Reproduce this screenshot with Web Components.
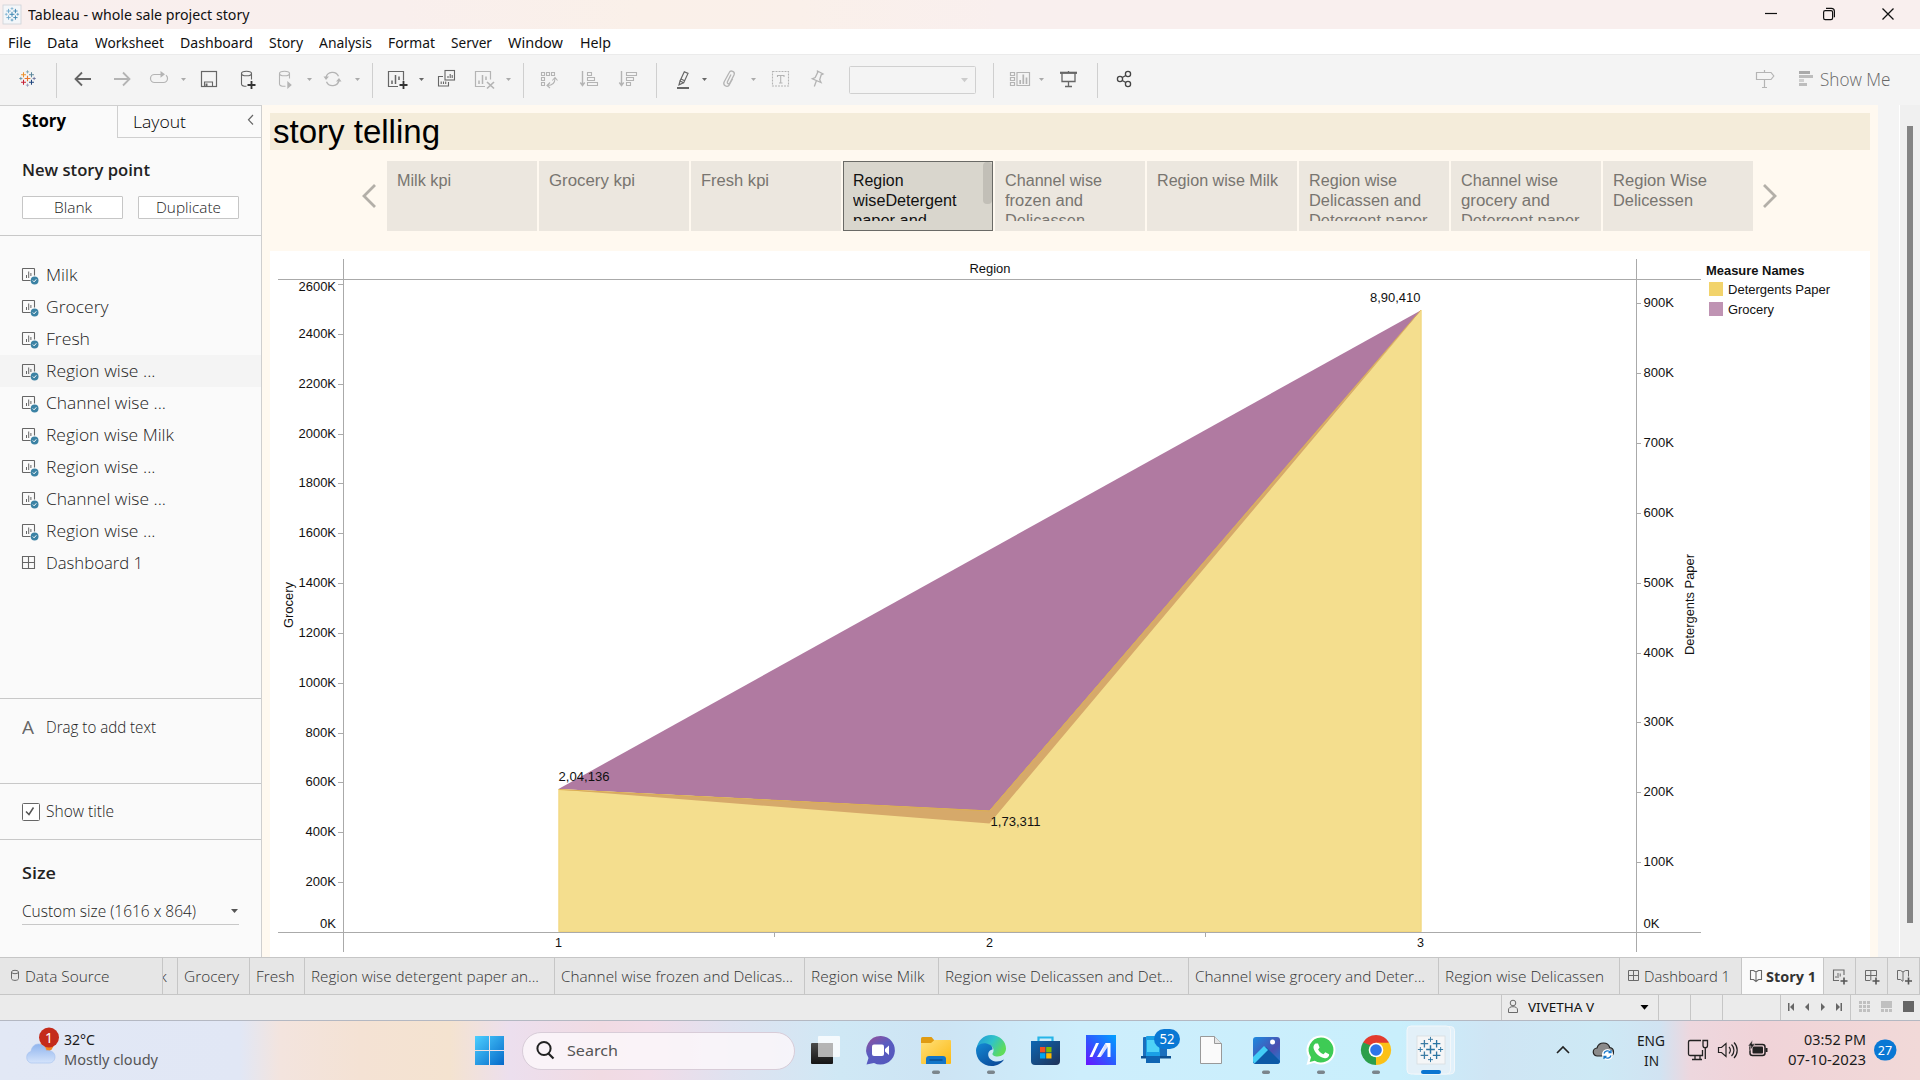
<!DOCTYPE html>
<html lang="en">
<head>
<meta charset="utf-8">
<title>Tableau - whole sale project story</title>
<style>
html,body{margin:0;padding:0;width:1920px;height:1080px;overflow:hidden;background:#fff}
</style>
</head>
<body>
<app-window></app-window>
<script>
const plus=(x,y,r,c,w)=>`<path d="M${x-r} ${y}H${x+r}M${x} ${y-r}V${y+r}" stroke="${c}" stroke-width="${w}" fill="none"/>`;
const logo=(cx,cy,k,cols)=>[[0,0,3,1.2],[-4.2,-4,2.6,1.1],[4.2,-4,2.6,1.1],[-4.2,4,2.6,1.1],[4.2,4,2.6,1.1],[0,-7,1.7,.8],[0,7,1.7,.8],[-7,0,1.7,.8],[7,0,1.7,.8]]
  .map((p,i)=>plus(cx+p[0]*k,cy+p[1]*k,p[2]*k,cols[i%cols.length],p[3]*Math.min(k,1.2))).join('');
const caret=(x,y,c='#aaa',w=5)=>`<path d="M${x} ${y}h${w}l${-w/2} ${w*.6}z" fill="${c}"/>`;
const G='#b4b4b4',D='#666';

/* Lays items out left to right; every item is [start, width, content, style, kind]. */
function row(top,h,items,start=0){
  let cur=start,out='';
  for(const [x,w,content,style='',kind='t'] of items){
    const ml=(x-cur).toFixed(1);
    out+=kind==='g'
      ?`<svg style="margin-left:${ml}px;${style}" width="${w}" height="${h}" viewBox="${x} ${top} ${w} ${h}" fill="none">${content}</svg>`
      :`<fit-text w="${w}" style="margin-left:${ml}px;${style}">${content}</fit-text>`;
    cur=x+w;
  }
  return out;
}
function define(name,css,html){
  customElements.define(name,class extends HTMLElement{
    connectedCallback(){
      if(this.shadowRoot)return;
      this.attachShadow({mode:'open'}).innerHTML=`<style>:host{display:block;box-sizing:border-box}*{box-sizing:border-box}svg{flex:none;display:block;overflow:visible}${css}</style>`+(typeof html==='function'?html(this):html);
    }
  });
}
/* One line of text set to an exact advance width. */
customElements.define('fit-text',class extends HTMLElement{
  connectedCallback(){
    if(this.shadowRoot)return;
    this.attachShadow({mode:'open'}).innerHTML='<style>:host{display:inline-block;white-space:nowrap;flex:none}span{display:inline-block;transform-origin:0 50%}</style><span><slot></slot></span>';
    const s=this.shadowRoot.querySelector('span'),w=+this.getAttribute('w'),n=s.getBoundingClientRect().width;
    this.style.width=w+'px';
    if(n)s.style.transform=`scaleX(${w/n})`;
  }
});

define('title-bar',`:host{height:29px;display:flex;align-items:center;background:linear-gradient(90deg,#f9efee 0,#f9efed 400px,#faf0e9 640px,#faf0ea 800px,#f9efee 1000px);font:14.5px "Noto Sans",sans-serif;color:#111}fit-text{margin-top:-2px}`,
 row(0,29,[
  [3,18,`<rect x="3" y="5" width="18" height="19" fill="#f3f6f9" stroke="#cdd3d8" stroke-width=".8"/>`+logo(12,14.3,.82,['#3a85b0','#6aa6cb']),'','g'],
  [27.5,221.500,'Tableau - whole sale project story'],
  [1765,12,`<path d="M1765 13.5h12" stroke="#111" stroke-width="1.2"/>`,'','g'],
  [1823,12,`<rect x="1823.6" y="10.6" width="9" height="9" rx="1.6" stroke="#111" stroke-width="1.2"/><path d="M1826 8.4h5.400a3 3 0 0 1 3 3v5.800" stroke="#111" stroke-width="1.2"/>`,'','g'],
  [1882,12,`<path d="M1882.500 8.500l11 11m0-11l-11 11" stroke="#111" stroke-width="1.3"/>`,'','g']]));

define('menu-bar',`:host{height:25px;display:flex;align-items:center;background:#fff;font:14.5px "Noto Sans",sans-serif;color:#111}`,
 row(29,25,[[8,23,'File'],[47,31.500,'Data'],[95,69,'Worksheet'],[180,73,'Dashboard'],[269,34,'Story'],[319,53,'Analysis'],[388,47,'Format'],[450.500,41,'Server'],[508,55,'Window'],[579.500,31,'Help']]));

const sep=x=>[x,1,`<path d="M${x+.5} 63v35" stroke="#cfcfcf"/>`,'','g'];
const ct=(x,c='#aaa')=>[x,5,caret(x,78,c),'','g'];
define('tool-bar',`:host{height:51px;display:flex;align-items:center;background:#f4f4f4;border-top:1px solid #ebebeb;font:300 17.5px "Open Sans",sans-serif;color:#666}svg{margin-top:-1px}fit-text{margin-top:-3px}`,
 row(54,51,[
  [19,17,logo(27.5,78.5,.95,['#e8762c','#eb912c','#5b879b','#c72035','#1f457e','#7199a6','#8a8fb5','#59879b','#5c6692']),'','g'],
  sep(56),
  [75,16,`<path d="M91 79H76m6-6.500l-6.500 6.500 6.500 6.500" stroke="${D}" stroke-width="1.8"/>`,'','g'],
  [114,16,`<path d="M114 79h15m-6-6.500l6.500 6.500-6.500 6.500" stroke="${G}" stroke-width="1.8"/>`,'','g'],
  [150,18,`<path d="M160 82.500h-5.500a4 4 0 0 1-4-4 4 4 0 0 1 4-4h8M156 82.500h7.500a4 4 0 0 0 4-4 3.600 3.600 0 0 0-1.500-3.300" stroke="${G}" stroke-width="1.2"/><path d="M160.500 71l4.500 3.300-4.500 3.500z" fill="${G}"/>`,'','g'],
  ct(181),
  [201,16,`<rect x="201.500" y="71.500" width="15" height="15" stroke="${D}" stroke-width="1.2"/><path d="M204.500 86.500v-4.500h8v4.500" stroke="${D}" stroke-width="1.1"/><rect x="205.500" y="83.500" width="2" height="3" fill="${D}"/>`,'','g'],
  [241,15,`<ellipse cx="246.500" cy="73.500" rx="5" ry="2.300" stroke="${D}" stroke-width="1.1"/><path d="M241.500 73.500v10.500c0 1.500 2 2.300 5 2.300M251.500 73.500v6" stroke="${D}" stroke-width="1.100"/>${plus(251.500,85,4,'#333',1.800)}`,'','g'],
  [279,13,`<ellipse cx="284.500" cy="73.500" rx="5" ry="2.300" stroke="${G}" stroke-width="1.100"/><path d="M279.500 73.500v10.500c0 1.500 2 2.300 5 2.300h1M289.500 73.500v5" stroke="${G}" stroke-width="1.100"/><path d="M287.300 81l4.500 4-4.500 4z" fill="${G}"/>`,'','g'],
  ct(307),
  [324,17,`<path d="M326 77.500a6.600 6.600 0 0 1 12.500-1.200M339 80.500a6.600 6.600 0 0 1-12.500 1.200" stroke="${G}" stroke-width="1.300"/><path d="M323.500 76.500h5.500l-3 3.500zM336 81.500h5.500l-2.500-3.500z" fill="${G}"/>`,'','g'],
  ct(355),sep(372),
  [388,19,`<path d="M398 86.500h-9.500v-15h15v9" stroke="${D}" stroke-width="1.200"/><path d="M392 84v-3.500M395.500 84v-9M399 80v-3.500" stroke="${D}" stroke-width="1.500"/>${plus(403.500,85,4,'#333',1.800)}`,'','g'],
  ct(419,D),
  [438,17,`<rect x="445" y="70.500" width="9.500" height="9.500" stroke="${D}" stroke-width="1.100"/><path d="M443 76.500h-4.500v9.500h10v-4M448 78v-2M450.200 78v-4M452.200 78v-3M441.200 84v-2.500M443.500 84v-2.500M445.700 84v-2.500" stroke="${D}" stroke-width="1.100"/>`,'','g'],
  [475,19,`<path d="M485 86.500h-9.500v-15h15v8" stroke="${G}" stroke-width="1.200"/><path d="M479 84v-3.500M482.500 84v-9M486 80v-3.500" stroke="${G}" stroke-width="1.500"/><path d="M487 82l7 6.500m0-6.500l-7 6.500" stroke="${G}" stroke-width="1.700"/>`,'','g'],
  ct(506),sep(523),
  [541,16,`<path d="M541.500 72.500h3v3h-3zM546.500 72.500h3v3h-3zM551.500 72.500h3v3h-3zM541.500 77.500h3v3h-3zM541.500 82.500h3v3h-3zM547.500 85.500c5 0 7.500-2 7.500-7.500M550 82.500l-3 3 3 2.500M552.300 80.500l2.700-3 2.500 3" stroke="${G}" stroke-width="1.100"/>`,'','g'],
  [580,18,`<path d="M582.500 71v14.500m-2.200-3l2.200 3 2.200-3" stroke="${G}" stroke-width="1.400"/><path d="M587.500 72.500h4v3h-4zM587.500 77.500h7v3h-7zM587.500 82.500h10v3h-10z" stroke="${G}" stroke-width="1.100"/>`,'','g'],
  [619,18,`<path d="M621.500 71v14.500m-2.200-3l2.200 3 2.200-3" stroke="${G}" stroke-width="1.400"/><path d="M626.500 72.500h10v3h-10zM626.500 77.500h7v3h-7zM626.500 82.500h4v3h-4z" stroke="${G}" stroke-width="1.100"/>`,'','g'],
  sep(656),
  [677,12,`<path d="M680 81l4.300-9.300 3.700 1.700-4.300 9.300zM680 81l-1 3.800 4.500-2.100M681 79l3.600 1.700" stroke="${D}" stroke-width="1.200"/><rect x="677" y="87" width="12" height="2" fill="${D}"/>`,'','g'],
  ct(702,D),
  [723,13,`<path d="M731 74.500l-3.700 7.500a1.400 1.400 0 0 0 2.400 1.300l4.300-8.300a2.700 2.700 0 0 0-4.900-2.300l-5 9.300a3 3 0 0 0 5 3.200l3.500-6.500" stroke="${G}" stroke-width="1.300"/>`,'','g'],
  ct(751),
  [772,17,`<rect x="772.500" y="71.500" width="16" height="14.500" stroke="${G}" stroke-width="1.100" stroke-dasharray="2 1"/><path d="M777.500 77v-1.500h6.500V77M780.700 75.500v7.500M779 83h3.500" stroke="${G}" stroke-width="1.100"/>`,'','g'],
  [811,13,`<path d="M817.500 71l5.500 3-1.800.8-1.500 5 1.300 2.700-8.700-3.700 2.900-1.300 2.300-4.700zM816.300 81l-2 5.500" stroke="${G}" stroke-width="1.300"/>`,'','g'],
  [849,127,`<rect x="849.500" y="66.500" width="126" height="27" rx="1" stroke="#d0d0d0"/>${caret(961,78,'#ccc',7)}`,'','g'],
  sep(993),
  [1010,20,`<path d="M1010.500 72.500h4v3h-4zM1010.500 77.500h4v3h-4zM1010.500 82.500h4v3h-4zM1017 72.500h12.500v13H1017z" stroke="${G}" stroke-width="1.200"/><path d="M1020.200 84v-4M1023.300 84v-9.500M1026.500 84v-6.500" stroke="${G}" stroke-width="1.700"/>`,'','g'],
  ct(1039),
  [1060,17,`<path d="M1060 72.800h17" stroke="${D}" stroke-width="2.200"/><path d="M1062 73v8.500h13V73M1068.500 71v1M1068.500 82v4.500M1065 86.500h7" stroke="${D}" stroke-width="1.300"/>`,'','g'],
  sep(1097),
  [1117,15,`<circle cx="1120" cy="79" r="2.600" stroke="#444" stroke-width="1.300"/><circle cx="1128" cy="74" r="2.600" stroke="#444" stroke-width="1.300"/><circle cx="1128" cy="84" r="2.600" stroke="#444" stroke-width="1.300"/><path d="M1122.300 77.500l3.500-2M1122.300 80.500l3.500 2" stroke="#444" stroke-width="1.300"/>`,'','g'],
  [1756,18,`<path d="M1764.500 70v2.500M1764.500 79.500v8M1762 87.500h5M1756.500 72.500h14.500l2.800 3.500-2.800 3.500h-14.500z" stroke="${G}" stroke-width="1.200"/>`,'','g'],
  [1799,14,`<path d="M1799 71h11v3h-11z" fill="#aaa"/><path d="M1799 75h14v3h-14zM1799 83h8v3h-8z" fill="#bdbdbd"/><path d="M1799 79h5v3h-5z" fill="#d0d0d0"/>`,'','g'],
  [1819.500,70.500,'Show Me']]));

const sheetIcon=`<svg width="17" height="18" viewBox="0 0 17 18" fill="none"><path d="M8.500 12.500H1a.5.500 0 0 1-.5-.5V1A.5.500 0 0 1 1 .500h11a.5.500 0 0 1 .500.500v6.500" stroke="#666" stroke-width="1.100"/><path d="M4.500 10V7M6.700 10V3.500M8.900 8V5" stroke="#666" stroke-width="1"/><circle cx="12.600" cy="12.500" r="3.900" fill="#3b82a4"/><path d="M10.800 12.500l1.300 1.300 2.200-2.500" stroke="#fff" stroke-width="1"/></svg>`;
const gridIcon=`<svg width="17" height="18" viewBox="0 0 17 18" fill="none"><path d="M.5.500h12v12H.5zM6.500.500v12M.5 6.500h12" stroke="#666" stroke-width="1.100"/></svg>`;
define('sheet-item',`:host{height:32px;display:flex;align-items:center;padding-left:22px;font:300 17px "Open Sans",sans-serif;color:#222}:host([active]){background:#f4f4f4}fit-text{margin:-2px 0 0 7px}svg{margin-top:4px}`,
 el=>`${el.hasAttribute('dashboard')?gridIcon:sheetIcon}<fit-text w="${el.getAttribute('w')}">${el.getAttribute('label')}</fit-text>`);

define('side-panel',`:host{width:262px;height:852px;background:#fafafa;border-right:1px solid #cfcfcf;display:flex;flex-direction:column;font:300 15.500px/22px "Open Sans",sans-serif;color:#222}
 .tabs{height:33px;display:flex;border-top:1px solid #cfcfcf;color:#000}.tab1{width:117px;padding:4px 0 0 22px;font-weight:700;font-size:17px}.tab2{flex:1;border-left:1px solid #cfcfcf;border-bottom:1px solid #cfcfcf;padding:5px 7px 0 15px;display:flex;justify-content:space-between;font-size:17px}
 .new{height:98px;border-bottom:1px solid #c8c8c8;padding:21px 22px 0}.h{font-weight:600;font-size:17px;height:22px;display:block}.btns{display:flex;gap:15px;margin-top:15px}.b{width:101px;height:23px;border:1px solid #c6c6c6;border-radius:1px;background:#fff;display:flex;align-items:center;justify-content:center;font-size:14.500px}
 .list{height:463px;padding-top:23px;border-bottom:1px solid #c8c8c8}.drag{height:85px;border-bottom:1px solid #c8c8c8;display:flex;padding:17px 0 0 22px;gap:12px}.show{height:56px;border-bottom:1px solid #c8c8c8;display:flex;align-items:center;padding-left:22px;gap:6px}.show fit-text{margin-top:-1px}
 .size{padding:22px 22px 0}.sel{display:flex;justify-content:space-between;align-items:center;border-bottom:1px solid #c8c8c8;height:29px;margin-top:12px;padding:2px 1px 0 0}`,
 `<div class="tabs"><div class="tab1"><fit-text w="44">Story</fit-text></div><div class="tab2"><fit-text w="53">Layout</fit-text><svg width="7" height="12" viewBox="0 0 7 12" style="margin-top:3px"><path d="M6 1L1.500 5.800 6 10.500" fill="none" stroke="#666" stroke-width="1.200"/></svg></div></div>
 <div class="new"><fit-text class="h" w="128">New story point</fit-text><div class="btns"><div class="b"><fit-text w="38">Blank</fit-text></div><div class="b"><fit-text w="65">Duplicate</fit-text></div></div></div>
 <div class="list">${[['Milk',31.5],['Grocery',62.5],['Fresh',44],['Region wise ...',109.5,'active'],['Channel wise ...',120],['Region wise Milk',128],['Region wise ...',109.5],['Channel wise ...',120],['Region wise ...',109.5],['Dashboard 1',97,'dashboard']].map(a=>`<sheet-item label="${a[0]}" w="${a[1]}" ${a[2]||''}></sheet-item>`).join('')}</div>
 <div class="drag"><fit-text w="12" style="font-size:17.500px;font-weight:400;color:#666">A</fit-text><fit-text w="110">Drag to add text</fit-text></div>
 <div class="show"><svg width="18" height="18" viewBox="0 0 18 18"><rect x=".5" y=".5" width="17" height="17" rx="1" fill="#fff" stroke="#666"/><path d="M4 8.500l3 3 4.500-7" fill="none" stroke="#555" stroke-width="1.500"/></svg><fit-text w="68">Show title</fit-text></div>
 <div class="size"><fit-text class="h" w="34">Size</fit-text><div class="sel"><fit-text w="174">Custom size (1616 x 864)</fit-text><svg width="7" height="4" viewBox="0 0 7 4"><path d="M0 0h7L3.500 4z" fill="#555"/></svg></div></div>`);

define('story-point',`:host{width:150px;height:70px;background:#ece7df;padding:10px 0 0 10px;color:#787570;font:16px/20px "Liberation Sans",sans-serif;display:flex;flex:none}
 :host([active]){background:#d9d6cd;color:#111;box-shadow:inset 0 0 0 1px #6a6a66}div{flex:1;height:50px;overflow:hidden}fit-text{display:block}i{display:none;width:9px;height:42px;margin:-9px 1px 0 0;border-radius:4px;background:#c2bfb7}:host([active]) i{display:block}`,
 el=>`<div>${el.getAttribute('lines').split('|').map(l=>{const[t,w]=l.split('~');return`<fit-text w="${w}">${t}</fit-text>`}).join('')}</div><i></i>`);

define('story-nav',`:host{height:70px;display:flex;align-items:center;padding-left:92px;margin-top:11px}.p{display:flex;gap:2px;margin:0 10px 0 11px}:host>svg,svg{margin-top:-1px}`,
 `<svg width="14" height="26" viewBox="0 0 14 26"><path d="M13 2L2 13l11 11" fill="none" stroke="#b3afa8" stroke-width="2.800"/></svg><div class="p">${['Milk kpi~54','Grocery kpi~86','Fresh kpi~68','!Region~50.5|wiseDetergent~103.5|paper and~74','Channel wise~97|frozen and~78|Delicassen~80','Region wise Milk~121','Region wise~88|Delicassen and~112|Detergent paper~118.5','Channel wise~97|grocery and~89|Detergent paper~118.5','Region Wise~94|Delicessen~80'].map(s=>`<story-point ${s[0]==='!'?'active':''} lines="${s.replace('!','')}"></story-point>`).join('')}</div><svg width="14" height="26" viewBox="0 0 14 26"><path d="M1 2l11 11L1 24" fill="none" stroke="#b3afa8" stroke-width="2.800"/></svg>`);

const T=(x,y,t,w,a='start',e='')=>`<text x="${x}" y="${y}" text-anchor="${a}" textLength="${w}" lengthAdjust="spacingAndGlyphs" ${e}>${t}</text>`;
const ly=[284,334,384,434,483,533,583,633,683,733,782,832,882], ry=[303,373,443,513,583,653,722,792,862];
define('area-chart',`:host{width:1600px;height:706px;background:#fff;margin-top:20px;overflow:hidden;font:13px "Liberation Sans",sans-serif}text{fill:#111}`,
 `<svg width="1600" height="706" viewBox="270 251 1600 706">
 <path d="M558.500 789L1421.500 310 989.500 811z" fill="#b07aa1"/>
 <path d="M558.500 789L989.500 811 1421.500 310V932H558.500z" fill="#f4de8e"/>
 <path d="M558.500 789.500L989.500 810.500 1421.500 310 989.500 823.500z" fill="#d6a96a"/>
 <path d="M558.500 789.500L989.500 811 1421 310" fill="none" stroke="#dbae52" stroke-width="1"/>
 <path d="M559 789.500V931.500H1421V310" fill="none" stroke="#f2d780" stroke-width="1"/>
 <g stroke="#aaa" fill="none"><path d="M278 279.500H1701M278 932.500H1701M343.500 259V952M1636.500 259V952M774.500 933v4M1205.500 933v4"/>
 <path d="${ly.map(y=>`M338 ${y+.5}h5`).join('')}${ry.map(y=>`M1637 ${y+.5}h4`).join('')}"/></g>
 ${ly.map((y,i)=>T(336,i?y+4:291,2600-200*i+'K',i<9?37.500:30.500,'end')).join('')}${T(336,928,'0K',16,'end')}
 ${ry.map((y,i)=>T(1643.500,y+4,900-100*i+'K',30.500)).join('')}${T(1643.500,928,'0K',16)}
 ${T(969.500,273,'Region',41)}${T(558.500,947,'1',7,'middle')}${T(989.500,947,'2',7,'middle')}${T(1420.500,947,'3',7,'middle')}
 ${T(558.500,781,'2,04,136',51)}${T(990.500,826,'1,73,311',50)}${T(1420.500,302,'8,90,410',50.500,'end')}
 ${T(0,0,'Grocery',46,'middle','transform="translate(293 605) rotate(-90)"')}${T(0,0,'Detergents Paper',101,'middle','transform="translate(1694 604.500) rotate(-90)"')}
 ${T(1706,275,'Measure Names',98.500,'start','font-weight="bold"')}
 <rect x="1709" y="282" width="14" height="14" fill="#f2d36b"/><rect x="1709" y="302" width="14" height="14" fill="#bf93b3"/>
 ${T(1728,294,'Detergents Paper',102)}${T(1728,314,'Grocery',46)}</svg>`);

define('story-canvas',`:host{width:1616px;height:852px;background:#fff9f0;padding:8px 0 0 8px}.t{width:1600px;height:37px;background:#f4ecda;font:33px/37px "Liberation Sans",sans-serif;color:#000;padding-left:3px}`,
 `<div class="t"><fit-text w="167">story telling</fit-text></div><story-nav></story-nav><area-chart></area-chart>`);
define('scroll-track',`:host{flex:1;background:#f4f4f4;display:flex;justify-content:flex-end}.r{width:21px;border-left:1px solid #fff;background:#f0f0f0;padding:21px 0 0 7px}.k{width:6px;height:797px;background:#858585}`,`<div class="r"><div class="k"></div></div>`);

const bsep=x=>[x,1,`<path d="M${x+.5} 957v37" stroke="#c6c6c6"/>`,'','g'];
const S='#6a6a6a';
const chart6=(x,y)=>`<path d="M${x+6} ${y+11}h-5.500v-10.500h10.500v5" stroke="${S}" stroke-width="1.100"/><path d="M${x+3} ${y+8.500}v-2M${x+5} ${y+8.500}v-5M${x+7.200} ${y+7}v-3" stroke="${S}"/>`;
define('sheet-tabs',`:host{height:38px;display:flex;align-items:center;background:#e6e6e6;border-top:1px solid #c6c6c6;border-bottom:1px solid #c6c6c6;font:300 15px "Open Sans",sans-serif;color:#333;overflow:hidden}.clip{overflow:hidden}`,
 row(958,36,[
  [11,8,`<ellipse cx="15" cy="972" rx="3.500" ry="1.700" stroke="${S}"/><path d="M11.500 972v6.500c0 2.500 7 2.500 7 0V972" stroke="${S}"/>`,'','g'],
  [25,84.500,'Data Source'],bsep(162),
  [163,6,`<svg class="clip" x="163" y="958" width="6" height="36"><text x="-3.500" y="24" font-size="15" fill="#333">k</text></svg>`,'','g'],
  bsep(177),[184,55,'Grocery'],bsep(249),[256,38.500,'Fresh'],bsep(304),
  [311,228,'Region wise detergent paper an...'],bsep(554),[561,232,'Channel wise frozen and Delicas...'],bsep(804),[811,113.500,'Region wise Milk'],bsep(938),[945,228,'Region wise Delicassen and Det...'],bsep(1188),[1195,230,'Channel wise grocery and Deter...'],bsep(1438),[1445,159,'Region wise Delicassen'],bsep(1619),
  [1628,11,`<path d="M1628.500 970.500h10v10h-10zM1633.500 970.500v10M1628.500 975.500h10" stroke="${S}"/>`,'','g'],
  [1644,86,'Dashboard 1'],
  [1741,25,`<rect x="1742" y="958" width="81" height="36" fill="#fafafa"/><path d="M1741.500 958v36M1823.500 958v36" stroke="#c6c6c6"/><path d="M1750.500 970.500h3l2.500 1.500 2.500-1.500h3v9h-3l-2.500 2-2.500-2h-3zM1756 972v9" stroke="${S}" stroke-width="1.100"/>`,'','g'],
  [1766,50,'Story 1','font-weight:700;position:relative;margin-top:-1px'],
  [1833,15,chart6(1833,969.500)+plus(1844,981,3.500,'#555',1.600),'','g'],bsep(1855),
  [1865,15,`<path d="M1870 980.500h-4.500v-10h11v6M1870.800 970.500v10M1865.500 975.500h11" stroke="${S}"/>`+plus(1876,981,3.500,'#555',1.600),'','g'],bsep(1887),
  [1897,15,`<path d="M1903 981.500l-2.500-2h-3v-9h3l2.500 1.500 2.500-1.500h3v6M1903 972v9" stroke="${S}"/>`+plus(1908.500,981,3.500,'#555',1.600),'','g'],bsep(1919)]));

const ssep=x=>[x,1,`<path d="M${x+.5} 995v25" stroke="#c6c6c6"/>`,'','g'];
define('status-bar',`:host{height:25px;display:flex;align-items:center;background:#ebebeb;font:13px "Noto Sans",sans-serif;color:#111}fit-text{margin-top:-2px}`,
 row(995,25,[ssep(1501),
  [1508,11,`<circle cx="1513" cy="1003" r="2.800" stroke="${S}"/><path d="M1508.500 1012.500v-2.500c0-2.500 2-3.300 4.500-3.300s4.500.800 4.500 3.300v2.500z" stroke="${S}"/>`,'','g'],
  [1528,66,'VIVETHA V'],[1640,9,caret(1640.500,1005,'#000',8),'','g'],ssep(1658),ssep(1690),ssep(1722),ssep(1780),
  [1788,55,`<path d="M1788 1003h1.500v8h-1.500zM1794 1003v8l-4-4zM1809 1003v8l-4-4zM1821 1003v8l4-4zM1836 1003v8l4-4zM1840.500 1003h1.500v8h-1.500z" fill="#666"/>`,'','g'],ssep(1850),
  [1859,56,[0,4,8].flatMap(a=>[0,4,8].map(b=>`<rect x="${1859+a}" y="${1001+b}" width="3" height="3" fill="#c0c0c0"/>`)).join('')+`<path d="M1881 1001h11v7h-11zM1881 1009h3v3h-3zM1885 1009h3v3h-3zM1889 1009h3v3h-3z" fill="#c0c0c0"/><rect x="1903" y="1001" width="11" height="11" fill="#666"/>`,'','g']]));

const dot=x=>`<rect x="${x-4}" y="1070.500" width="8" height="3.500" rx="1.700" fill="#7b858c"/>`;
define('task-bar',`:host{height:60px;display:flex;align-items:center;border-top:1px solid #b4b8c2;background:linear-gradient(90deg,#e2e8f5 0,#e1e7f5 240px,#f3e4de 280px,#f4e2d4 360px,#f4e3d0 450px,#ecdfee 510px,#f1dbe3 600px,#f1dce8 650px,#dfe2f0 730px,#cfe8f5 840px,#cde4f4 940px,#cdeefc 1080px,#c9effc 1400px,#cfe5f4 1490px,#cde9f5 1600px,#d1e3f2 1660px,#edd7de 1690px,#f0d3d8 1760px,#f1d9d8 1920px);font:14.500px/20px "Noto Sans",sans-serif;color:#1b1b1b}
 :host>svg,svg{margin-top:-1px}.col{display:flex;flex-direction:column;flex:none;padding-bottom:3px}.s{width:273px;height:38px;margin:0 0 0 18px;border-radius:19px;background:#fbf7fad9;border:1px solid #d8ccd8;display:flex;align-items:center;gap:13px;padding-left:13px;color:#555;flex:none}.s fit-text{margin-top:-1px}.r{align-items:flex-end}.c{align-items:center;padding-bottom:2px}`,
 row(1020,60,[
  [25,34,`<defs><linearGradient id="cl" x2="0" y2="1"><stop stop-color="#8fb4ee"/><stop offset="1" stop-color="#d5e4fb"/></linearGradient></defs><circle cx="47" cy="1045" r="6.500" fill="#f58220"/><path d="M31 1063a6 6 0 0 1 0-11.500c.5-4.500 3.500-7.500 7.500-7.500 4.500 0 7 3 7.800 6.500 5.500-.5 8.700 2.500 8.700 6.300 0 3.500-2.500 6.200-6 6.200z" fill="url(#cl)" stroke="#a3c0ef" stroke-width=".6"/><circle cx="49" cy="1037.500" r="10" fill="#c42b1c"/><text x="49" y="1042.500" text-anchor="middle" font-size="14" fill="#fff">1</text>`,'','g']])+
 `<div class="col" style="margin-left:5px"><fit-text w="31">32°C</fit-text><fit-text w="94" style="color:#555">Mostly cloudy</fit-text></div>`+
 row(1020,60,[[475,29,`<defs><linearGradient id="w" x2="1" y2="1"><stop stop-color="#4ccfff"/><stop offset="1" stop-color="#0669c9"/></linearGradient></defs><path d="M475 1036h14v14h-14zM490 1036h14v14h-14zM475 1051h14v14h-14zM490 1051h14v14h-14z" fill="url(#w)"/>`,'','g']],158)+
 `<div class="s"><svg width="18" height="18" viewBox="0 0 18 18"><circle cx="8" cy="7.500" r="6.600" fill="none" stroke="#222" stroke-width="2"/><path d="M12.500 12.500l5 5" stroke="#222" stroke-width="2.200"/></svg><fit-text w="51">Search</fit-text></div>`+
 row(1020,60,[
  [811,30,`<defs><linearGradient id="tv" x2="0" y2="1"><stop stop-color="#4a4a4a"/><stop offset="1" stop-color="#151515"/></linearGradient></defs><rect x="811" y="1043" width="22" height="21" rx="1" fill="url(#tv)"/><rect x="818" y="1036" width="22" height="21" rx="1" fill="#fff" opacity=".78"/><path d="M818 1043h15v14h-15z" fill="#aaa" opacity=".75"/>`,'','g'],
  [866,29,`<defs><linearGradient id="ch" x2=".6" y2="1"><stop stop-color="#9a4f96"/><stop offset=".5" stop-color="#5a5cc0"/><stop offset="1" stop-color="#5558bd"/></linearGradient></defs><path d="M881 1036a14.300 14.300 0 1 1-7 27l-7.500 1.500 2-6.500A14.300 14.300 0 0 1 881 1036z" fill="url(#ch)"/><rect x="872" y="1044.500" width="12" height="11.500" rx="2" fill="#fff"/><path d="M885 1049l4-3.500v9.500l-4-3.500z" fill="#fff"/>`,'','g'],
  [921,30,`<path d="M921 1038.500a1.500 1.500 0 0 1 1.500-1.500h9l3 3.500-3 4h-10.500z" fill="#e09b12"/><defs><linearGradient id="fe" x2="1" y2="1"><stop stop-color="#ffe07a"/><stop offset="1" stop-color="#fcb912"/></linearGradient></defs><path d="M921 1043h10l3.500-3H950a1 1 0 0 1 1 1v22a1 1 0 0 1-1 1h-28a1 1 0 0 1-1-1z" fill="url(#fe)"/><path d="M926 1064v-5a3 3 0 0 1 3-3h14a3 3 0 0 1 3 3v5z" fill="#1275c8"/><path d="M929.500 1060h13" stroke="#0a4f93" stroke-width="1.500"/>${dot(936)}`,'','g'],
  [976,30,`<defs><linearGradient id="e1" x2="1" y2=".5"><stop stop-color="#2196dc"/><stop offset=".55" stop-color="#30c3c8"/><stop offset="1" stop-color="#5fdc5a"/></linearGradient><linearGradient id="e2" x2=".7" y2="1"><stop stop-color="#1389d4"/><stop offset="1" stop-color="#0b4c9b"/></linearGradient></defs><path d="M976.500 1049c1-8 7-14 14.500-14 9 0 15 6.500 15 13.500 0 5-4 8-8.500 8-3.500 0-5.500-1.500-5-3 2-2.500 1.500-8-4.500-9-6-.5-10 2-11.500 4.500z" fill="url(#e1)"/><path d="M976 1050.500c0-5 5-8 10.500-7 4.500.800 6.500 3.500 6 6-5 .5-6 7.500-1 10.500 4 2.500 9 1.500 12.500-.5-2.500 4-7 6.500-12.500 6.500-9 0-15.500-7-15.500-15.500z" fill="url(#e2)"/>${dot(991)}`,'','g'],
  [1031,29,`<defs><linearGradient id="st" x2="1" y2="1"><stop stop-color="#0c67b4"/><stop offset="1" stop-color="#203257"/></linearGradient></defs><path d="M1038.500 1042v-4.500h14v4.500" stroke="#27b5e8" stroke-width="2.200"/><path d="M1031 1041h29v20a4 4 0 0 1-4 4h-21a4 4 0 0 1-4-4z" fill="url(#st)"/><path d="M1040 1047h5.300v5.300h-5.300z" fill="#f25022"/><path d="M1046.200 1047h5.300v5.300h-5.300z" fill="#7fba00"/><path d="M1040 1053.200h5.300v5.300h-5.300z" fill="#00a4ef"/><path d="M1046.200 1053.200h5.300v5.300h-5.300z" fill="#ffb900"/>`,'','g'],
  [1086,30,`<defs><linearGradient id="my" x1="1" x2="0" y2="1"><stop stop-color="#00a2ff"/><stop offset=".5" stop-color="#2b5cff"/><stop offset="1" stop-color="#6a12ff"/></linearGradient></defs><rect x="1086" y="1035" width="30" height="30" fill="url(#my)"/><path d="M1089.500 1057l6.500-14h3l-6.500 14zM1097 1057l8.500-14h5v14h-3v-10l-6.800 10z" fill="#fff"/><path d="M1105.500 1043l2 4-6.800 10h-1z" fill="#b9c6ff" opacity=".6"/>`,'','g'],
  [1141,39,`<rect x="1143" y="1037" width="24" height="20" rx="1" fill="#1b6fbd"/><path d="M1141 1056h30v2.500h-30z" fill="#0c4f90"/><rect x="1146" y="1036" width="14" height="27" rx="1" fill="#1aa0e6"/><path d="M1147 1040h12v12h-12z" fill="#4dd2f7"/><path d="M1146 1056h14v7h-14z" fill="#0f65b3"/><rect x="1154" y="1029" width="26" height="20" rx="10" fill="#0a78d4"/><text x="1167" y="1044" text-anchor="middle" font-size="14" fill="#fff" textLength="15" lengthAdjust="spacingAndGlyphs">52</text>`,'','g'],
  [1200,22,`<path d="M1200.500 1036.500h14l7 7v20h-21z" fill="#fafafa" stroke="#999"/><path d="M1214.500 1036.500v7h7" fill="#e5e5e5" stroke="#999"/>`,'','g'],
  [1253,27,`<defs><linearGradient id="ph" x2="1" y2="1"><stop stop-color="#1d8be0"/><stop offset=".6" stop-color="#4a50b0"/><stop offset="1" stop-color="#1f7fd3"/></linearGradient></defs><rect x="1253" y="1037" width="27" height="27" rx="3" fill="url(#ph)"/><path d="M1253 1061l13-14 14 14a3 3 0 0 1-3 3h-21a3 3 0 0 1-3-3z" fill="#0d5aa7"/><path d="M1253 1057l11-11 4 4-13.500 13.500a3 3 0 0 1-1.500-2.500z" fill="#43cdf6"/><circle cx="1272.500" cy="1042" r="2.500" fill="#fff"/>${dot(1266)}`,'','g'],
  [1306,29,`<path d="M1321 1035.500a14.500 14.500 0 1 1-7 27.200l-7.500 2.200 2-7.500A14.500 14.500 0 0 1 1321 1035.500z" fill="#fff"/><path d="M1321 1037.500a12.500 12.500 0 1 1-6.300 23.300l-5 1.300 1.300-4.900a12.500 12.500 0 0 1 10-19.700z" fill="#3ecb55"/><path d="M1315.500 1043.500l2.500 0 1.600 4-1.500 2c1.500 2.500 3 3.800 5.400 4.800l1.800-2 3.800 1.900c.3 2.500-2 4-4.300 4-5-.700-10.300-5.500-11.300-10.300-.2-1.800.7-3.500 2-4.400z" fill="#fff"/>${dot(1321)}`,'','g'],
  [1361,30,`<path d="M1376 1050L1363 1042.500A15 15 0 0 1 1389 1042.500z" fill="#e33b2e"/><path d="M1376 1050L1389 1042.500A15 15 0 0 1 1376 1065z" fill="#fbc116"/><path d="M1376 1050L1376 1065A15 15 0 0 1 1363 1042.500z" fill="#2b9f4b"/><path d="M1376 1042.800h13l-6.800 11z" fill="#fbc116"/><path d="M1369.700 1053.500l-6.700-11 8 3z" fill="#2b9f4b"/><path d="M1376 1065l6.300-11.500h-5z" fill="#fbc116"/><circle cx="1376" cy="1050" r="7.300" fill="#fff"/><circle cx="1376" cy="1050" r="5.800" fill="#2f75e8"/>${dot(1376)}`,'','g'],
  [1407,48,`<rect x="1411" y="1026.500" width="43.500" height="47.500" rx="4" fill="#e1f1fb" stroke="#f2f7fa"/><rect x="1407" y="1026" width="43.500" height="48" rx="4" fill="#e3f0f8" stroke="#f3f7fa"/><rect x="1417" y="1036" width="28" height="28" fill="#f5f6f7" stroke="#d5dadd" stroke-width=".7"/>${logo(1430.500,1049.500,1.450,['#2b75a2','#3b7ca5'])}<rect x="1421" y="1070" width="20" height="4" rx="2" fill="#0a75d1"/>`,'','g'],
  [1556,14,`<path d="M1557 1053l6-6 6 6" stroke="#222" stroke-width="1.600"/>`,'','g'],
  [1593,21,`<path d="M1597.500 1056a4 4 0 0 1-.5-8c1-3.500 3.500-5 6.500-5 3.500 0 5.500 2 6.200 4.500 2.500.3 3.800 2 3.800 4.500 0 2.500-1.500 4-4 4z" fill="#8b8b8b" stroke="#222" stroke-width="1.200"/><circle cx="1607.500" cy="1054.500" r="5.500" fill="#fff"/><path d="M1604 1053.500a3.700 3.700 0 0 1 6.500-1.200M1611 1055.500a3.700 3.700 0 0 1-6.500 1.200M1611 1050v2.700h-2.500M1604 1059v-2.700h2.500" stroke="#1677c9" stroke-width="1.300"/>`,'','g']],795)+
 `<div class="col c" style="margin-left:23px"><fit-text w="28">ENG</fit-text><fit-text w="15">IN</fit-text></div>`+
 row(1020,60,[
  [1688,20,`<path d="M1701 1040.500h-11a1.500 1.500 0 0 0-1.500 1.500v12a1.500 1.500 0 0 0 1.500 1.500h12.500V1050M1695 1055.500v3.500M1700 1055.500v3.500M1692 1059.500h10" stroke="#222" stroke-width="1.300"/><path d="M1703 1040.500h4.500v5a2.200 2.200 0 0 1-4.500 0zM1705.300 1048v11" stroke="#222" stroke-width="1.300"/>`,'','g'],
  [1718,20,`<path d="M1718.500 1047.500h3l4.500-4v13l-4.500-4h-3zM1729 1047a4.500 4.500 0 0 1 0 6.500M1731.500 1044.500a8 8 0 0 1 0 11.500M1734 1042.500a11 11 0 0 1 0 15.500" stroke="#222" stroke-width="1.200"/>`,'','g'],
  [1748,20,`<rect x="1750" y="1044.500" width="15" height="11" rx="2.500" stroke="#222" stroke-width="1.500"/><rect x="1752.500" y="1046.500" width="10.500" height="7" rx="1" fill="#222"/><path d="M1766.500 1048v4" stroke="#222" stroke-width="2"/><path d="M1752.500 1040l-4.500 6h3l-1 4.500 5-6.500h-3z" fill="#222" stroke="#efd5da" stroke-width=".5"/>`,'','g']],1665)+
 `<div class="col r" style="margin-left:20px"><fit-text w="62">03:52 PM</fit-text><fit-text w="78">07-10-2023</fit-text></div>`+
 row(1020,60,[[1873,24,`<rect x="1874" y="1039.500" width="22.500" height="21" rx="10.500" fill="#0a78d4"/><text x="1885" y="1054.500" text-anchor="middle" font-size="12.500" fill="#fff">27</text>`,'','g']],1866));

define('app-window',`:host{width:1920px;height:1080px;display:flex;flex-direction:column;overflow:hidden}.m{display:flex;height:852px}title-bar,menu-bar,tool-bar,.m,sheet-tabs,status-bar,task-bar{flex:none}`,
 `<title-bar></title-bar><menu-bar></menu-bar><tool-bar></tool-bar><div class="m"><side-panel></side-panel><story-canvas></story-canvas><scroll-track></scroll-track></div><sheet-tabs></sheet-tabs><status-bar></status-bar><task-bar></task-bar>`);
</script>
</body>
</html>
